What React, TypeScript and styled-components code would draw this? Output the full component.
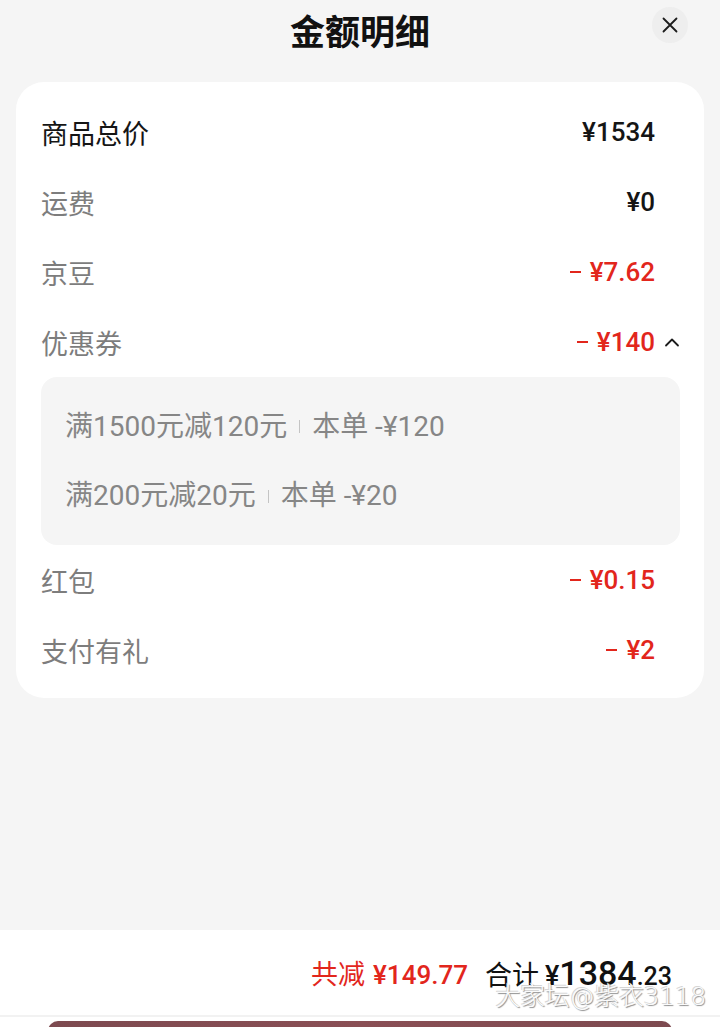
import React from "react";
import styled, { createGlobalStyle } from "styled-components";

const Global = createGlobalStyle`
  html, body { margin: 0; padding: 0; background: #f5f5f5; }
  body { font-family: "Noto Sans CJK SC", "Noto Sans", sans-serif; }
  * { box-sizing: border-box; }
`;

const Page = styled.div`
  position: relative;
  width: 720px;
  height: 1027px;
  overflow: hidden;
  display: flex;
  flex-direction: column;
  background: #f5f5f5;
`;

const Header = styled.div`
  position: relative;
  height: 60px;
  display: flex;
  align-items: center;
  justify-content: center;
`;

const Title = styled.h1`
  margin: 0;
  font-size: 35px;
  font-weight: 700;
  color: #111;
  line-height: 1;
  margin-top: -2px;
`;

const CloseBtn = styled.button`
  position: absolute;
  right: 32px;
  top: 7px;
  width: 36px;
  height: 36px;
  border-radius: 50%;
  border: none;
  background: #eeeeee;
  display: flex;
  align-items: center;
  justify-content: center;
  padding: 0;
`;

const Card = styled.div`
  margin: 22px 16px 0;
  background: #fff;
  border-radius: 28px;
  padding: 15px 24px 13px 25px;
  display: flex;
  flex-direction: column;
`;

const Row = styled.div`
  height: 70px;
  display: flex;
  align-items: center;
  justify-content: space-between;
`;

const Label = styled.span<{ $strong?: boolean }>`
  font-size: 27px;
  color: ${(p) => (p.$strong ? "#151515" : "#7d7d7d")};
  line-height: 1;
`;

const ValueWrap = styled.div`
  display: flex;
  align-items: center;
`;

const Value = styled.span<{ $red?: boolean }>`
  display: flex;
  align-items: center;
  font-family: Roboto, "Noto Sans CJK SC", sans-serif;
  font-size: 26px;
  font-weight: 500;
  color: ${(p) => (p.$red ? "#e2261c" : "#151515")};
  line-height: 1;
`;

const Minus = styled.span`
  display: inline-block;
  width: 11px;
  height: 2px;
  background: currentColor;
  margin-right: 9px;
`;

const ChevSlot = styled.span`
  width: 25px;
  display: flex;
  justify-content: flex-end;
  align-items: center;
`;

const CouponBox = styled.div`
  background: #f5f5f5;
  border-radius: 16px;
  padding: 15px 24px 14px 24px;
  display: flex;
  flex-direction: column;
`;

const CouponLine = styled.div`
  height: 69.5px;
  display: flex;
  align-items: center;
  font-family: Roboto, "Noto Sans CJK SC", sans-serif;
  font-size: 28px;
  color: #868686;
  line-height: 1;
`;

const Sep = styled.span`
  display: inline-block;
  width: 1px;
  height: 13px;
  background: #c4c4c4;
  margin: 0 12px;
`;

const Spacer = styled.div`
  flex: 1;
`;

const Footer = styled.div`
  position: relative;
  height: 87px;
  background: #fff;
  display: flex;
  align-items: center;
  justify-content: flex-end;
  padding-right: 48px;
  border-bottom: 2px solid #f2f2f2;
`;

const Saved = styled.span`
  color: #e2261c;
  font-size: 27px;
  display: flex;
  align-items: baseline;
  margin-right: 17px;
`;

const Money = styled.span<{ $size: number }>`
  font-family: Roboto, "Noto Sans CJK SC", sans-serif;
  font-weight: 500;
  font-size: ${(p) => p.$size}px;
`;

const Total = styled.span`
  color: #111;
  font-size: 27px;
  display: flex;
  align-items: baseline;
`;

const Gap = styled.span<{ $w: number }>`
  display: inline-block;
  width: ${(p) => p.$w}px;
`;

const BottomArea = styled.div`
  height: 10px;
  background: #fff;
  padding: 4px 48px 0;
`;

const ActionBar = styled.div`
  height: 20px;
  border-radius: 10px 10px 0 0;
  background: linear-gradient(90deg, #7d4a50, #8a4f55 50%, #7d4a50);
`;

const Watermark = styled.span`
  position: absolute;
  right: 14px;
  bottom: 6px;
  font-family: "DejaVu Sans", "Noto Sans CJK SC", sans-serif;
  font-size: 25px;
  font-weight: 300;
  color: #fbfbfb;
  letter-spacing: -0.3px;
  text-shadow: 1px 1px 1px #8c8c8c, -1px -1px 0 #d6d6d6;
  line-height: 1;
`;

const Close = () => (
  <svg width="16" height="16" viewBox="0 0 16 16">
    <path d="M1.5 1.5 L14.5 14.5 M14.5 1.5 L1.5 14.5" stroke="#1c1c1c" strokeWidth="1.8" strokeLinecap="round" />
  </svg>
);

const ChevronUp = () => (
  <svg width="16" height="10" viewBox="0 0 16 10">
    <polyline points="2,8.5 8,2.5 14,8.5" fill="none" stroke="#1c1c1c" strokeWidth="1.8" strokeLinecap="round" strokeLinejoin="round" />
  </svg>
);

type Item = { label: string; value: string; red?: boolean; strong?: boolean; chevron?: boolean };

const top: Item[] = [
  { label: "商品总价", value: "¥1534", strong: true },
  { label: "运费", value: "¥0" },
  { label: "京豆", value: "¥7.62", red: true },
  { label: "优惠券", value: "¥140", red: true, chevron: true },
];

const bottom: Item[] = [
  { label: "红包", value: "¥0.15", red: true },
  { label: "支付有礼", value: "¥2", red: true },
];

const coupons = [
  { rule: "满1500元减120元", off: "本单 -¥120" },
  { rule: "满200元减20元", off: "本单 -¥20" },
];

const ItemRow = ({ item }: { item: Item }) => (
  <Row>
    <Label $strong={item.strong}>{item.label}</Label>
    <ValueWrap>
      <Value $red={item.red}>
        {item.red ? <Minus aria-label="-" /> : null}
        {item.value}
      </Value>
      <ChevSlot>{item.chevron ? <ChevronUp /> : null}</ChevSlot>
    </ValueWrap>
  </Row>
);

export default function App() {
  return (
    <>
      <Global />
      <Page>
        <Header>
          <Title>金额明细</Title>
          <CloseBtn aria-label="关闭">
            <Close />
          </CloseBtn>
        </Header>
        <Card>
          {top.map((it) => (
            <ItemRow key={it.label} item={it} />
          ))}
          <CouponBox>
            {coupons.map((c) => (
              <CouponLine key={c.rule}>
                {c.rule}
                <Sep />
                {c.off}
              </CouponLine>
            ))}
          </CouponBox>
          {bottom.map((it) => (
            <ItemRow key={it.label} item={it} />
          ))}
        </Card>
        <Spacer />
        <Footer>
          <Saved>
            共减<Gap $w={8} />
            <Money $size={26}>¥149.77</Money>
          </Saved>
          <Total>
            合计<Gap $w={6} />
            <Money $size={27}>¥</Money>
            <Money $size={34}>1384</Money>
            <Money $size={25}>.23</Money>
          </Total>
          <Watermark>大家坛@紫衣3118</Watermark>
        </Footer>
        <BottomArea>
          <ActionBar />
        </BottomArea>
      </Page>
    </>
  );
}
